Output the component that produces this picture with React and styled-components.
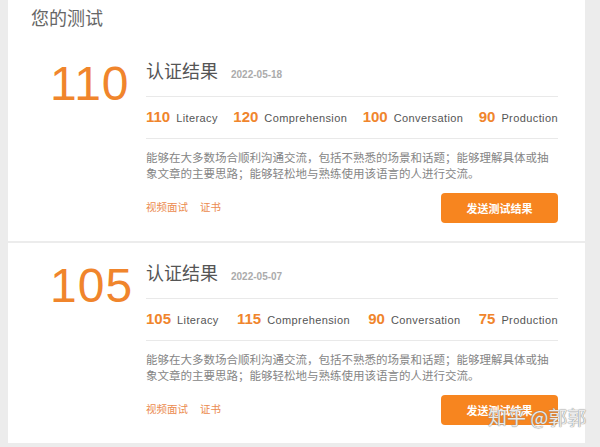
import React from "react";
import styled, { createGlobalStyle } from "styled-components";

const Global = createGlobalStyle`
  html, body { margin: 0; padding: 0; background: #ececec; }
  body { font-family: "Liberation Sans", "Noto Sans CJK SC", sans-serif; }
`;

const Page = styled.div`
  position: relative;
  width: 600px;
  height: 447px;
  overflow: hidden;
  padding: 0 15px 0 8px;
  box-sizing: border-box;
  background: #ececec;
`;

const Card = styled.div`
  background: #fff;
  display: flex;
  flex-direction: column;
`;

const Header = styled.div`
  height: 41px;
  box-sizing: border-box;
  padding: 5px 0 0 23px;
  font-family: "Noto Sans CJK SC", sans-serif;
  font-size: 18px;
  line-height: 24px;
  color: #666;
`;

const Section = styled.div`
  display: grid;
  grid-template-columns: 138px 412px;
  padding: 17px 0 18px;
  border-top: ${(p) => (p.$first ? "none" : "2px solid #ececec")};
`;

const BigScore = styled.div`
  padding: 2px 0 0 42px;
  font-family: "Liberation Sans", sans-serif;
  font-size: 48px;
  line-height: 48px;
  color: #f0852c;
  letter-spacing: 1px;
`;

const Body = styled.div`
  display: flex;
  flex-direction: column;
`;

const TitleRow = styled.div`
  display: flex;
  align-items: baseline;
  gap: 13px;
  height: 38px;
  border-bottom: 1px solid #e9e9e9;
`;

const Title = styled.span`
  font-family: "Noto Sans CJK SC", sans-serif;
  font-size: 18px;
  line-height: 24px;
  color: #555;
`;

const DateText = styled.span`
  font-size: 10px;
  font-weight: bold;
  color: #ababab;
`;

const Scores = styled.div`
  display: flex;
  justify-content: space-between;
  align-items: center;
  height: 39px;
  padding-bottom: 2px;
  border-bottom: 1px solid #e9e9e9;
`;

const ScoreItem = styled.div`
  display: flex;
  align-items: baseline;
  gap: 6px;
`;

const ScoreNum = styled.span`
  font-size: 15px;
  font-weight: bold;
  color: #f0852c;
`;

const ScoreLabel = styled.span`
  font-size: 11px;
  letter-spacing: 0.4px;
  color: #555;
`;

const Desc = styled.p`
  margin: 10px 0 0;
  font-family: "Noto Sans CJK SC", sans-serif;
  font-size: 11.5px;
  line-height: 16px;
  color: #858585;
`;

const Actions = styled.div`
  display: flex;
  justify-content: space-between;
  align-items: center;
  margin-top: 12px;
`;

const Links = styled.div`
  display: flex;
  gap: 12px;
  padding-bottom: 3px;
`;

const LinkText = styled.a`
  font-family: "Noto Sans CJK SC", sans-serif;
  font-size: 10.5px;
  color: #eb8b4f;
  text-decoration: none;
`;

const SendButton = styled.button`
  width: 117px;
  height: 30px;
  border: none;
  border-radius: 4px;
  background: #f7851f;
  color: #fff;
  font-family: "Noto Sans CJK SC", sans-serif;
  font-size: 11px;
  font-weight: bold;
  padding: 0;
`;

const Watermark = styled.div`
  position: absolute;
  left: 488px;
  top: 403px;
  font-family: "Noto Sans CJK SC", sans-serif;
  font-size: 19px;
  color: rgba(255, 255, 255, 0.85);
  text-shadow: 0 0 1px #777, 0 0 1px #999;
  white-space: nowrap;
`;

const tests = [
  {
    total: 110,
    date: "2022-05-18",
    scores: [
      [110, "Literacy"],
      [120, "Comprehension"],
      [100, "Conversation"],
      [90, "Production"],
    ],
  },
  {
    total: 105,
    date: "2022-05-07",
    scores: [
      [105, "Literacy"],
      [115, "Comprehension"],
      [90, "Conversation"],
      [75, "Production"],
    ],
  },
];

const desc =
  "能够在大多数场合顺利沟通交流，包括不熟悉的场景和话题；能够理解具体或抽象文章的主要思路；能够轻松地与熟练使用该语言的人进行交流。";

export default function App() {
  return (
    <Page>
      <Global />
      <Card>
        <Header>您的测试</Header>
        {tests.map((t, i) => (
          <Section key={t.date} $first={i === 0}>
            <BigScore>{t.total}</BigScore>
            <Body>
              <TitleRow>
                <Title>认证结果</Title>
                <DateText>{t.date}</DateText>
              </TitleRow>
              <Scores>
                {t.scores.map(([n, l]) => (
                  <ScoreItem key={l}>
                    <ScoreNum>{n}</ScoreNum>
                    <ScoreLabel>{l}</ScoreLabel>
                  </ScoreItem>
                ))}
              </Scores>
              <Desc>{desc}</Desc>
              <Actions>
                <Links>
                  <LinkText>视频面试</LinkText>
                  <LinkText>证书</LinkText>
                </Links>
                <SendButton>发送测试结果</SendButton>
              </Actions>
            </Body>
          </Section>
        ))}
      </Card>
      <Watermark>知乎 @郭郭</Watermark>
    </Page>
  );
}
